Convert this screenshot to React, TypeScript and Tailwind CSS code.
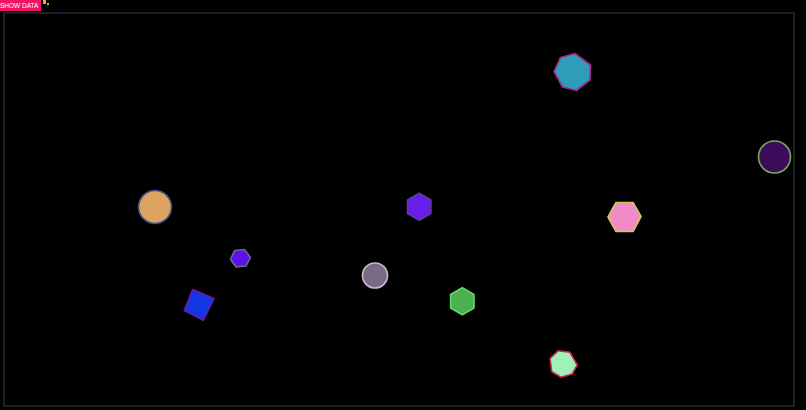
import React from 'react';

type Shape =
  | { kind: 'circle'; cx: number; cy: number; r: number; fill: string; stroke: string }
  | { kind: 'poly'; points: [number, number][]; fill: string; stroke: string };

function regular(cx: number, cy: number, r: number, n: number, rot: number): [number, number][] {
  const pts: [number, number][] = [];
  for (let i = 0; i < n; i++) {
    const a = rot + (i * 2 * Math.PI) / n;
    pts.push([cx + r * Math.cos(a), cy + r * Math.sin(a)]);
  }
  return pts;
}

const shapes: Shape[] = [
  {
    kind: 'poly',
    points: [
      [575, 53.5], [590.5, 65], [590, 80], [576.5, 90.5], [562.5, 87], [554, 71.5], [560.5, 57.5],
    ],
    fill: '#2f9db8',
    stroke: '#9b2a8c',
  },
  { kind: 'circle', cx: 774.5, cy: 157, r: 16, fill: '#3c0b5a', stroke: '#79a860' },
  { kind: 'circle', cx: 155, cy: 207, r: 16.5, fill: '#dea35f', stroke: '#3f4f8a' },
  { kind: 'poly', points: regular(419.2, 206.7, 13.5, 6, -Math.PI / 2), fill: '#6a1de9', stroke: '#5b3ca0' },
  {
    kind: 'poly',
    points: [
      [616, 202.5], [633, 202.5], [641, 216.5], [633, 231.5], [616, 231.5], [608, 217],
    ],
    fill: '#f28ac9',
    stroke: '#d4c75a',
  },
  {
    kind: 'poly',
    points: [
      [234.5, 250.5], [244.5, 249.5], [250.5, 257.5], [246, 266], [236, 267], [230.5, 259.5],
    ],
    fill: '#5d12ea',
    stroke: '#5f7080',
  },
  { kind: 'circle', cx: 375, cy: 275.5, r: 12.5, fill: '#7a6a88', stroke: '#cbbbd0' },
  {
    kind: 'poly',
    points: [
      [192.7, 289.5], [214, 298.5], [203.3, 320.3], [184.2, 310.5],
    ],
    fill: '#1236e3',
    stroke: '#6a1aa8',
  },
  { kind: 'poly', points: regular(462.3, 301.2, 13.5, 6, -Math.PI / 2), fill: '#4bb04f', stroke: '#5ed86a' },
  {
    kind: 'poly',
    points: [
      [558.3, 350.7], [570, 352.3], [577.3, 365], [572.3, 374], [561, 377.3], [551.7, 371.7], [550, 358.3],
    ],
    fill: '#a0f0b8',
    stroke: '#c42050',
  },
];

export default function App() {
  return (
    <div className="w-[806px] h-[410px] bg-black overflow-hidden" style={{ fontFamily: '"Liberation Sans", Arial, sans-serif' }}>
      <div className="flex items-start h-[12px]">
        <button
          type="button"
          className="h-[11px] w-[41px] bg-[#ec1463] text-white text-[6.5px] leading-[11px] text-left pl-0 whitespace-nowrap"
        >
          SHOW DATA
        </button>
        <div className="flex items-start ml-[2px]">
          <div className="w-[3px] h-[4px] bg-[#f5a623]" />
          <div className="w-[2px] h-[2px] bg-[#f5a623] mt-[3px] ml-[1px]" />
        </div>
      </div>
      <div className="ml-[3px] w-[792px] h-[395px] border-2 border-[#1f1f27]">
        <svg width="788" height="391" viewBox="5 14 788 391" className="block">
          {shapes.map((s, i) =>
            s.kind === 'circle' ? (
              <circle key={i} cx={s.cx} cy={s.cy} r={s.r} fill={s.fill} stroke={s.stroke} strokeWidth={1.6} />
            ) : (
              <polygon
                key={i}
                points={s.points.map((p) => p.join(',')).join(' ')}
                fill={s.fill}
                stroke={s.stroke}
                strokeWidth={1.6}
                strokeLinejoin="round"
              />
            ),
          )}
        </svg>
      </div>
    </div>
  );
}
